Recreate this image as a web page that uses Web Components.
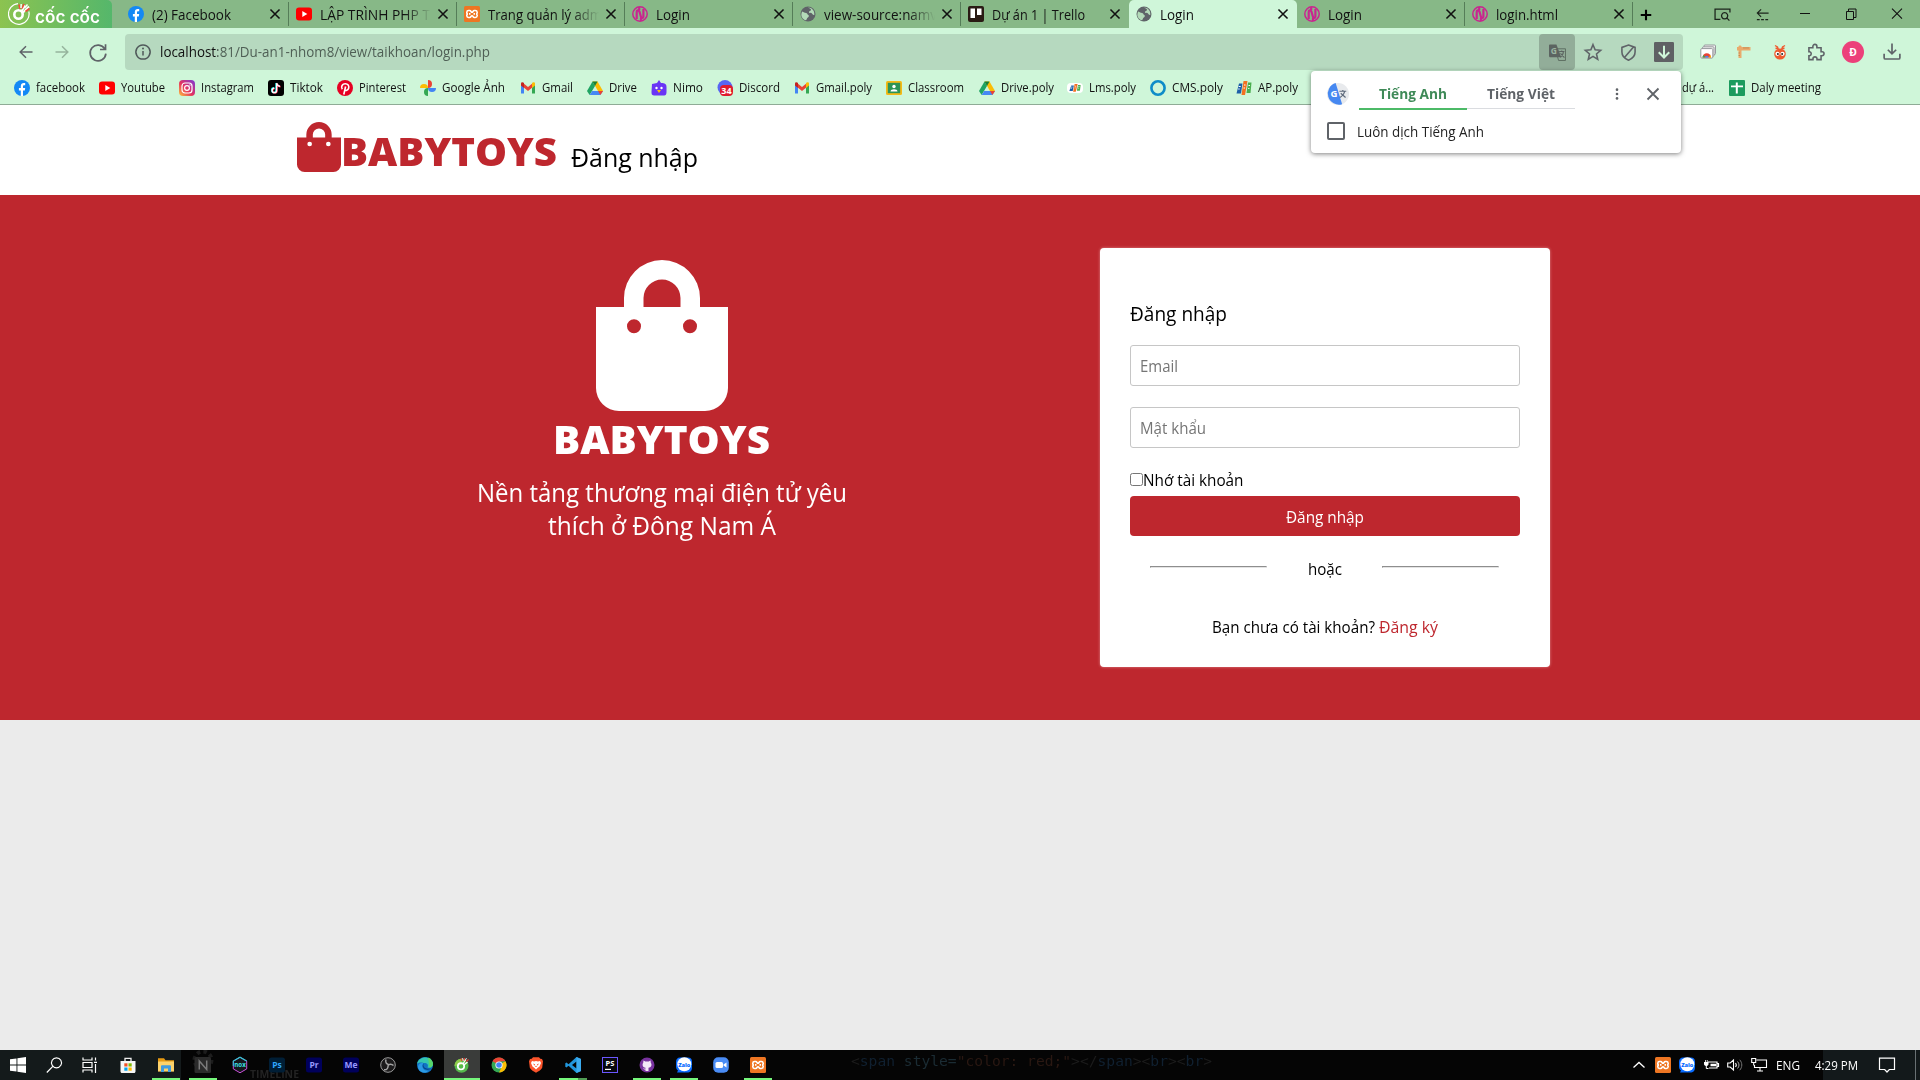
<!DOCTYPE html>
<html lang="vi">
<head>
<meta charset="utf-8">
<title>Login</title>
<style>
html,body{margin:0;height:100%}
body{font-family:"Open Sans","Noto Sans",sans-serif;font-size:12px;color:#111;background:#ebebeb;overflow:hidden}
</style>
</head>
<body>
<desktop-screen></desktop-screen>
<script>
const globe = '<circle cx="8" cy="8" r="7.500" fill="#5f6368"/><path d="M2 5.500c2 .5 2.500 1.500 4 1.500s1 1.500 2.300 2c1 .5.500 2-.5 2.500s-.8 2-1.800 2.800C3 13.500 1 11 1.400 8zM8 1.400c1 1 3 .8 3 2.300s-2 1-2 2.300 2.500.5 3 1.500 1.600 1.600 2.300 1.500C14.800 4.500 12 1.500 8 1.400z" fill="#b3dab8"/>';
const nlogo = '<circle cx="8" cy="8" r="7.200" fill="none" stroke="#c9258f" stroke-width="1.500"/><path d="M4.700 13V6c0-2 2-2 2.700-.5l1.600 5.500c.6 1.600 2.400 1.300 2.400-.4V3M7.200 1v3M9 15v-3" fill="none" stroke="#c9258f" stroke-width="2.200"/>';
const xampp = '<rect width="16" height="16" rx="1.500" fill="#ee7623"/><path d="M4.500 4.500h1.200C7 4.500 7 6.300 8 6.300s1-1.800 2.300-1.800h1c2.400 0 2.400 3.500.7 3.500 1.700 0 1.700 3.500-.7 3.500h-1C9 11.500 9 9.700 8 9.700s-1 1.800-2.300 1.800H4.500c-2.200 0-2.200-3.500-.5-3.500-1.700 0-1.700-3.500.5-3.500zM5 7.900h1.500M9.500 7.900H11" fill="none" stroke="#fff" stroke-width="1.600"/>';
const gmail = '<path d="M1 3.500v10h3V7.200z" fill="#4285f4"/><path d="M15 3.500v10h-3V7.200z" fill="#34a853"/><path d="M4 3.800 8 7l4-3.200v4L8 11 4 7.800z" fill="#ea4335"/><path d="M1 3.700C1 2 3 2 4 3v4.900L1 5.600z" fill="#c5221f"/><path d="M15 3.700C15 2 13 2 12 3v4.900l3-2.300z" fill="#fbbc04"/>';
const drive = '<path d="M5.500 1.500h5L16 11h-5z" fill="#fbbc04"/><path d="M5.500 1.500 8 6 2.600 15 0 11z" fill="#1fa463"/><path d="M5.200 11H16l-2.600 4H2.600z" fill="#4688f4"/><path d="M10.500 1.500 8 6 5.500 1.500z" fill="#188038"/><path d="m11 11h5l-2.600 4z" fill="#ea4335"/>';
const yt = '<rect y="1.500" width="16" height="13" rx="3" fill="#f00"/><path d="M6.300 5v6l5-3z" fill="#fff"/>';
const fb = '<circle cx="8" cy="8" r="8" fill="#1489f5"/><path d="M6.800 16v-5.500H4.900V8h1.900V6.300C6.800 4 8 3 9.700 3l1.500.1v2.100h-1c-.9 0-1.200.5-1.200 1.200V8h2.200l-.4 2.500H9V16z" fill="#fff"/>';
const zalo = '<path d="M4 .5h8c2.500 0 4 1.500 4 4v6c0 3-1.500 5-5 5H1l1-2C.5 12.500 0 11 0 9V5C0 2 1.500.5 4 .5z" fill="#0a6cff"/><circle cx="8.300" cy="7.300" r="7" fill="#fff"/><text x="8.300" y="9.500" font-size="5.600" font-weight="800" text-anchor="middle" fill="#0a6cff" font-family="Open Sans">Zalo</text>';
const fpt = '<path d="M3 3.500h3.500L5 13.500H.5z" fill="#1d5fa8"/><path d="M7.500 1h4L9 15H5.500z" fill="#f37021"/><path d="M12 2.500h3.500L14.500 13H10.500z" fill="#4bae4f"/><path d="M2.700 6.500h2M2.200 9h1.500M8 5h1.500M7.500 8h1.500M12.500 5.500h1.500M12.200 8.500h1.200" stroke="#fff" stroke-width="1"/>';
const adobe = (t,b,c)=>`<rect y=".5" width="16" height="15" rx="2.500" fill="${b}"/><text x="8" y="11" font-size="8.500" font-weight="700" text-anchor="middle" fill="${c}" font-family="Open Sans">${t}</text>`;
const line = (d,c='#5f6368',w=1.5)=>`<path d="${d}" fill="none" stroke="${c}" stroke-width="${w}"/>`;
const ICONS = {
 fb, yt, gmail, drive, xampp, globe, nlogo, zalo,
 trello:'<rect width="16" height="16" rx="2" fill="#2a1b14"/><path d="M2.500 2.500H7V12H2.500zM9 2.500h4.500V9H9z" fill="#fff"/>',
 insta:'<defs><linearGradient id="g" x1="0" y1="1" x2="1" y2="0"><stop stop-color="#fdc33d"/><stop offset=".45" stop-color="#e5325f"/><stop offset="1" stop-color="#7b38d8"/></linearGradient></defs><rect width="16" height="16" rx="4" fill="url(#g)"/><rect x="3" y="3" width="10" height="10" rx="3" fill="none" stroke="#fff" stroke-width="1.200"/><circle cx="8" cy="8" r="2.400" fill="none" stroke="#fff" stroke-width="1.200"/><circle cx="11" cy="5" r=".7" fill="#fff"/>',
 tiktok:'<rect width="16" height="16" rx="3" fill="#000"/>'+line('M8.200 3v7.200a2.200 2.200 0 1 1-2.200-2.200M8.200 3c.4 2 1.500 3 3.500 3.200','#25f4ee',1.8)+line('M9 3.500v7.200a2.200 2.200 0 1 1-2.200-2.200M9 3.500c.4 2 1.500 3 3.500 3.200','#fe2c55',1.6)+line('M8.600 3.200v7.200a2.200 2.200 0 1 1-2.200-2.200M8.600 3.200c.4 2 1.500 3 3.500 3.200','#fff',1.3),
 pin:'<circle cx="8" cy="8" r="8" fill="#e60023"/>'+line('M6.800 14.500 8.600 6.500M5.300 9.300C3.500 6.500 5.500 3.800 8.300 3.800c2.600 0 3.900 1.900 3.400 4.200-.6 2.500-3.200 3.200-4.100 1.500','#fff',1.6),
 photos:'<path d="M8 8V0a4 4 0 0 1 0 8z" fill="#fbbc04" transform="rotate(-90 8 8)"/><path d="M8 8V0a4 4 0 0 0 0 8z" fill="#ea4335" transform="rotate(0 8 8)" opacity="0"/><path d="M8 8h8a4 4 0 0 0-8 0z" fill="#4285f4" transform="translate(0 0) scale(1 -1) translate(0 -16)"/><path d="M8 8v8a4 4 0 0 1 0-8z" fill="#34a853"/><path d="M8 8V0a4 4 0 0 1 0 8z" fill="#ea4335"/>',
 nimo:'<path d="M1 4 6 3l2-3 2 3c4 0 5.500 1 5.500 4v5c0 3-1 3.500-4 3.500H4C1 15.500.5 14.500.5 12z" fill="#6a35f5"/><circle cx="5.500" cy="8" r="1.200" fill="#fff"/><circle cx="10.500" cy="8" r="1.200" fill="#fff"/><path d="M6 10h4l-2 3z" fill="#fdc400"/>',
 discord:'<circle cx="8" cy="7.500" r="7.500" fill="#5865f2"/><rect x="3" y="5" width="13" height="11" rx="4" fill="#e01b2e"/><text x="9.500" y="13.700" font-size="9" font-weight="700" text-anchor="middle" fill="#fff" font-family="Open Sans">34</text>',
 classroom:'<rect y="1" width="16" height="14" rx="1.500" fill="#f5ba16"/><rect x="1.800" y="2.800" width="12.400" height="10.400" fill="#2d9455"/><circle cx="8" cy="6.500" r="1.700" fill="#fff"/><path d="M4.500 11.500c0-3 7-3 7 0z" fill="#fff"/>',
 lms:'<rect y="3" width="16" height="10" rx="4" fill="#fff"/><g transform="translate(2 3.500) scale(.75 .55)">'+fpt+'</g>',
 cms:'<ellipse cx="8" cy="8" rx="6.600" ry="6.700" fill="none" stroke="#0e8cc8" stroke-width="2.600"/>', ap:fpt,
 sheet:'<rect width="16" height="16" rx="1" fill="#1c9b5e"/><path d="M6.800 2.500h2V5.500H14v1.800H8.800v6.200h-2V7.300H2V5.500h4.800z" fill="#fff"/>',
 close:line('M2.800 2.800l10.400 10.400M13.200 2.800l-10.400 10.400','#111',1.8), plus:line('M8 2v12M2 8h12','#000',2.4),
 back:line('M14.500 8H2M8 2.200 2.200 8 8 13.800'), fwd:line('M1.500 8H14M8 2.200 13.800 8 8 13.800','#96b49d'),
 reload:line('M14 5.200A7 7 0 1 0 15 9.500M14.700 1v4.800H9.800'),
 info:line('M8 .9a7.100 7.100 0 1 0 .01 0M8 7v4.600','#50595a',1.5)+'<circle cx="8" cy="4.600" r="1" fill="#50595a"/>',
 star:line('M8 1.500l1.900 4.600 4.900.4-3.700 3.200 1.100 4.800L8 11.900l-4.200 2.600 1.100-4.800L1.200 6.500l4.900-.4z','#5f6368',1.4),
 shield:line('M8 1 14.200 3.200v4.300c0 3.500-2.600 6.300-6.200 7.700C4.400 13.800 1.800 11 1.800 7.500V3.200zM4 13 12.500 3'),
 dl:'<rect width="16" height="16" rx="1" fill="#5f6064"/>'+line('M8 3v9M3.800 8.200 8 12.400l4.200-4.200','#cff6d9',1.6),
 trans:'<path d="M6 4.500h9.500v11H9z" fill="none" stroke="#5c6c61" stroke-width=".9"/><path d="M1 .5h6L11.500 12.500H1.500C.5 12.500 0 12 0 11V1.500C0 .8.500.5 1 .5z" fill="#5c6461"/><text x="4.600" y="9.200" font-size="8" font-weight="700" text-anchor="middle" fill="#9bb5a2" font-family="Open Sans">G</text>'+line('M9.500 7h5M12 6v1M10.500 12.500c1.800-1.200 3-2.800 3-5.200M10.800 8.800l3.700 4','#5c6461',1),
 gtr:'<circle cx="8" cy="8" r="8" fill="#e8eaed"/><path d="M6.300 0A8 8 0 1 0 11 15.400z" fill="#4688f1"/><text x="5" y="10.500" font-size="7" font-weight="700" text-anchor="middle" fill="#fff" font-family="Open Sans">G</text>'+line('M9 6h5M11.500 5v1M9.500 10.500c1.500-1 3-2 3.300-4.500M10 7.500l3.500 3','#5f6b7c',.9),
 shot:'<rect x="4" y="1" width="11.500" height="9.500" rx="1" fill="#f3f3f3" stroke="#96989c"/><rect x="2.500" y="2.800" width="11.500" height="9.500" rx="1" fill="#f3f3f3" stroke="#96989c"/><rect x=".8" y="4.600" width="12" height="9.500" rx="1" fill="#fff" stroke="#96989c"/><path d="M2.500 13.600a4.300 4.300 0 0 1 8.600 0z" fill="#e94335"/><path d="M2.500 13.600c0-1 .3-2 1-2.700l2 2.700z" fill="#34a853"/><path d="M9 13.600 10.200 11c.6.700.9 1.500.9 2.600z" fill="#fbbc04"/><path d="M5 13.600a1.800 1.800 0 0 1 3.600 0z" fill="#4285f4"/>',
 ruler:'<path d="M2.500 2.500c0-1.300 3-1.300 3 0V3H14.500v3.600H5.500V14h-3V6.600H1V3h1.500z" fill="#e9aa6c"/>'+line('M8 3v1.800M10 3v1.800M12 3v1.800M2.500 9H4M2.500 11.500H4','#b67d48',.7),
 ant:'<ellipse cx="8" cy="10" rx="5.800" ry="5.500" fill="#ef5a30"/>'+line('M6.500 5.500 5.500 3 3 1.500M9.500 5.500l1-2.500L13 1.500M5.500 4l-2 .5M10.500 4l2 .5','#ef5a30',1.3)+'<circle cx="5.500" cy="9.800" r="2.100" fill="#fff"/><circle cx="10.500" cy="9.800" r="2.100" fill="#fff"/><circle cx="5.900" cy="10" r="1" fill="#222"/><circle cx="10.100" cy="10" r="1" fill="#222"/>',
 puzzle:line('M1.700 4.200H5.200V3a1.700 1.700 0 0 1 3.600 0v1.200h3.700v3.600h.9a1.750 1.750 0 0 1 0 3.500h-.9v3.500H8.900v-.7a1.800 1.800 0 0 0-3.600 0v.7H1.700v-3.500h.7a1.800 1.800 0 0 0 0-3.500h-.7z','#5f6368',1.4),
 avatar:'<circle cx="8" cy="8" r="8" fill="#ec407a"/><text x="8" y="10.700" font-size="7.500" font-weight="700" text-anchor="middle" fill="#fff" font-family="Open Sans">Đ</text>',
 tray:line('M8 .5v9M4.300 6 8 9.700 11.700 6M1 9.500v3.500c0 .7.500 1.200 1.200 1.200h11.600c.7 0 1.200-.5 1.200-1.200V9.500'),
 wsearch:line('M6 12.500H1V3h14v3M10 6.300a2.900 2.900 0 1 0 .01 0M12 11.200l2.500 2.600','#1c241c',1.2), warrow:line('M14.500 6.500H2.500M6.500 2.500l-4 4 4 4M2 13.500h3M6.500 13.500h3M11 13.500h3','#1c241c',1.3),
 wmin:line('M3 7.500h10','#111',1), wmax:line('M3.500 5.500h7v8h-7zM5.500 5V3h7.500v8.500H11','#111',1), wclose:line('M3 2.700l10 10M13 2.700l-10 10','#111',1.1),
 dots:'<circle cx="8" cy="3" r="1.500" fill="#5f6368"/><circle cx="8" cy="8" r="1.500" fill="#5f6368"/><circle cx="8" cy="13" r="1.500" fill="#5f6368"/>', xg:line('M2.500 2.500l11 11M13.500 2.500l-11 11','#5f6368',1.8),
 win:'<path d="M0 2.300 6.500 1.400V7.600H0zM7.400 1.300 16 0v7.600H7.400zM0 8.400h6.500v6.200L0 13.700zM7.400 8.400H16V16l-8.600-1.200z" fill="#fff"/>',
 find:line('M10.500.8a5 5 0 1 0 .01 0M6.800 9.300.8 15.500','#fff',1.2),
 task:line('M1 .5v2.500h9V.5M1 5.500h9v5H1zM1 15.500V13h9v2.500M13.500.5v3M13.500 7v9M12 5.300h3','#fff',1.2),
 store:'<path d="M5 4V1.300h6V4" fill="none" stroke="#eee" stroke-width="1.300"/><path d="M.5 4h15v10.500c0 .8-.6 1.500-1.500 1.500H2c-.9 0-1.500-.7-1.500-1.500z" fill="#f5f5f5"/><path d="M4.300 6.300h3.200v3.200H4.300z" fill="#f25022"/><path d="M8.500 6.300h3.200v3.200H8.500z" fill="#7fba00"/><path d="M4.300 10.500h3.200v3.200H4.300z" fill="#00a4ef"/><path d="M8.500 10.500h3.200v3.200H8.500z" fill="#ffb900"/>',
 folder:'<path d="M0 1.200h6l1.500 2H16v11H0z" fill="#e79a12"/><path d="M0 4.500h16v10H0z" fill="#fdd26b"/><path d="M3 15V9.500c0-.8.500-1.200 1.200-1.200h7.600c.7 0 1.200.4 1.200 1.200V15h-3v-3.500H6V15z" fill="#3f9be0"/>',
 neo:'<circle cx="8" cy="3" r="8.500" fill="none" stroke="#1d1d1d" stroke-width="4" stroke-dasharray="3.500 3.200"/><rect x="-.5" width="16.500" height="16" rx="1.500" fill="#2b2b2b"/>'+line('M4.300 12.500V4l7.400 8.500V3.500','#7b7b7b',1.5),
 nox:'<path d="M8 .2 14.700 4.100v7.800L8 15.800 1.300 11.900V4.100z" fill="#15171c" stroke="#c94fd8" stroke-width="1"/><path d="M1.300 9V4.100L8 .2l6.700 3.900" fill="none" stroke="#30c9d6" stroke-width="1.100"/><text x="8" y="10" font-size="6.200" font-weight="700" text-anchor="middle" fill="#3ce0e5" font-family="Open Sans">nox</text>',
 ps:adobe('Ps','#001e36','#31a8ff'), pr:adobe('Pr','#00005b','#9999ff'), me:adobe('Me','#00005b','#9999ff'),
 obs:'<circle cx="8" cy="8" r="7.300" fill="#1c1b1c" stroke="#9b9b9b"/><path d="M6 2.500c-1 3 .5 4.500 2.500 5M13.500 8.500c-2-2-4.500-1.500-5.500 0M4 12.800c3 .3 4.500-2 4-4.500" fill="none" stroke="#a5a5a5" stroke-width="1.500"/>',
 edge:'<circle cx="8" cy="8" r="8" fill="#1173c4"/><path d="M.1 7C1-.8 14.500-2.200 16 7c.3 3-2.700 4.300-5.500 3.500 1.500-3.500-1-5-4-4.500C3 5 .8 6 .1 7z" fill="#35c6b0"/><path d="M11 .6c3 1 5 4 5 6.400-.2 2-1.500 3.300-3.500 3.600z" fill="#58d66a"/><path d="M6.300 6.200C4 9 6 14.500 11.500 13.700 8 17.500 1 15 1 9.500c1-3 3-3.700 5.300-3.300z" fill="#2b9ae4"/><path d="M7 6.500c-2 2.500 1 6.500 7.500 5-1 1-7 2.500-8.500-1.500C5.300 8.500 6 7 7 6.500z" fill="#063f83"/>',
 coccoc:'<circle cx="7.500" cy="8.800" r="7" fill="#55b94b"/><path d="M.5 9A7 7 0 0 1 8 1.800L7.500 8z" fill="#8fca4a"/><circle cx="7" cy="9.300" r="3.200" fill="none" stroke="#fff" stroke-width="1.700"/>'+line('M9.300 6.500 11.500 2.500M10 8l3.500-3','#fff',1.2)+line('M7 1.500l1 2.500M10.500 1l-.8 3M14.500 2.500 12 4.700','#ed3a38',1.1)+line('M8.500 1l.8 3M12.500 1l-1.500 3','#fff',.8),
 chrome:'<circle cx="8" cy="8" r="7.500" fill="#34a853"/><path d="M8 8 1.500 4.250A7.500 7.500 0 0 1 14.500 4.250L8 4.500z" fill="#ea4335"/><path d="M8 8 14.500 4.250A7.500 7.500 0 0 1 8 15.500L11 9.500z" fill="#fbbc04"/><circle cx="8" cy="8" r="3.600" fill="#fff"/><circle cx="8" cy="8" r="2.800" fill="#4285f4"/>',
 brave:'<path d="M5 .3h6l1.300 1.500 1.700.3 1 2.200-.8 6.500c-1 2-4.200 4-6.200 5-2-1-5.200-3-6.200-5L1 4.300l1-2.200 1.700-.3z" fill="#fb542b"/><path d="M4 4l2 .5L8 4l2 .5 2-.5 1 2-1.500 3.500L9.500 11 8 12.500 6.500 11l-2-1.500L3 6z" fill="#fff"/><path d="M5 6.500l2 .7-.5 1.500zM11 6.500l-2 .7.5 1.500zM8 8.500 7 10h2z" fill="#fb542b"/>',
 vscode:'<path d="M11.500 0 16 2v12l-4.500 2-8-7.300L1.500 10.500.3 9.800V6.200l1.200-.7 2 1.700zM11.500 4.500 7 8l4.500 3.500z" fill="#2196dc" fill-rule="evenodd"/><path d="M11.500 0 16 2v12l-4.500 2z" fill="#3bacf0"/>',
 phps:'<rect x=".5" y=".5" width="15" height="15" fill="#08080f" stroke="#6b57ff"/><text x="8" y="9" font-size="7.500" font-weight="700" text-anchor="middle" fill="#fff" font-family="Open Sans">PS</text><path d="M3 11.800h6v1.200H3z" fill="#fff"/>',
 github:'<circle cx="8" cy="8" r="7.500" fill="#78329e"/><path d="M4.500 3.500 6.300 4.500h3.400l1.800-1c.3 1 .2 1.500.2 2C13.500 8 12 10.500 9.500 10.800V14h-3v-1.500c-1.500.2-2-.7-2.500-1.500 1 .2 1.300.9 2.500.7v-.9C4 10.500 2.700 8 4.300 5.500c0-.5 0-1 .2-2z" fill="#f3e9f8"/>',
 zoomapp:'<rect x=".2" y=".2" width="15.600" height="15.600" rx="5" fill="#4a8cf5"/><rect x="2.500" y="5" width="7.500" height="6" rx="1.500" fill="#fff"/><path d="M10.500 7.500 13.500 5.500v5l-3-2z" fill="#fff"/>',
 up:line('M2.500 10.500 8 5.500l5.500 5','#fff',1.3),
 batt:line('M5 5h9v6H6M14.500 6.500h1v3h-1','#fff',1.2)+'<path d="M7.500 6.800h5.700v2.500H7.500zM1 5h4.500v2c0 1-.8 1.800-1.700 2H3c-1.200-.2-2-1-2-2zM2 3h.8v2H2zM3.800 3h.8v2h-.8z" fill="#fff"/>'+line('M3.300 9v2.500H5.500','#fff',1),
 vol:line('M.7 6h2.500L6.500 3v10L3.200 10H.7zM8.500 6c1 1.300 1 2.800 0 4','#fff',1.1)+line('M10.500 4.500c2 2 2 5 0 7','#aaa',1)+line('M12.700 2.800c2.800 3 2.800 7.400 0 10.400','#777',1),
 net:line('M5.500 3h10v7.500h-12V8M9 10.500v3M6 14h6M.7 1.500h4v4h-4zM2.700 5.500v3','#fff',1.1),
 note:line('M.5 1.200h15v11.300H10.300L8 15l-2.300-2.500H.5z','#fff',1.2)
};
class El extends HTMLElement{
  constructor(){super();this.attachShadow({mode:'open'});}
  connectedCallback(){if(!this.done){this.done=1;this.shadowRoot.innerHTML=this.render();this.after&&this.after();}}
  a(n,d=''){return this.getAttribute(n)??d;}
}
const def=(n,c)=>customElements.define(n,c);

/* Vector icon drawn on a 16-unit grid */
def('ui-icon',class extends El{render(){const s=this.a('size','16');return `<style>:host{display:block;flex:none;width:${s}px;height:${s}px}svg{display:block;overflow:visible}</style><svg width="${s}" height="${s}" viewBox="0 0 16 16">${ICONS[this.a('name')]||''}</svg>`;}});

/* Single line of text condensed or widened to a set width */
def('fit-text',class extends El{
  render(){return `<style>:host{display:block;flex:none;white-space:nowrap;width:${this.a('w')}px}span{display:inline-block;transform-origin:0 50%}</style><span><slot></slot></span>`;}
  after(){const s=this.shadowRoot.querySelector('span'),n=s.getBoundingClientRect().width;if(n)s.style.transform=`scaleX(${this.a('w')/n})`;}
});

def('browser-tab',class extends El{render(){const on=this.hasAttribute('active');return `<style>
:host{display:flex;align-items:center;box-sizing:border-box;width:168px;height:28px;padding-left:7px;flex:none;font-size:14px;line-height:27px;background:${on?'#cff6d9':'none'};${on?'border-radius:5px 5px 0 0;':''}position:relative}
.t{width:114px;margin-left:8px;overflow:hidden;${this.hasAttribute('fade')?'-webkit-mask:linear-gradient(90deg,#000 84px,transparent 111px);':''}}
.c{margin-left:2px}
i{width:1px;height:24px;margin-left:6px;background:${this.hasAttribute('nosep')?'none':'#557d58'}}</style>
<ui-icon name="${this.a('icon')}"></ui-icon><div class="t"><fit-text w="${this.a('w')}">${this.a('label')}</fit-text></div><ui-icon class="c" name="close" size="14"></ui-icon><i></i>`;}});

def('tab-strip',class extends El{render(){const T=[['fb','(2) Facebook',79],['yt','LẬP TRÌNH PHP T',110,'fade'],['xampp','Trang quản lý adm',114,'fade'],['nlogo','Login',34],['globe','view-source:namv',113,'fade'],['trello','Dự án 1 | Trello',93,'nosep'],['globe','Login',34,'active nosep'],['nlogo','Login',34],['nlogo','login.html',62]];
return `<style>:host{display:flex;height:28px;background:#87b887}
.logo{display:flex;align-items:center;width:112px;box-sizing:border-box;padding-left:8px;gap:4px;background:linear-gradient(90deg,#8cc350,#55b76b);border-radius:0 5px 0 0;color:#fff;font:600 18px/24px Inter,"Open Sans",sans-serif;margin-right:9px}
.logo fit-text{margin-top:5px}.plus{margin:8px 0 0 6px}.sp{flex:1}.w{display:flex;align-items:center}</style>
<div class="logo"><svg width="23" height="24" viewBox="0 0 23 24" fill="none" stroke="#fff"><path d="M10 1.700A10.300 10.300 0 1 0 20.800 9.500" stroke-width="1.200"/><circle cx="10.500" cy="12.500" r="4.200" stroke-width="2.600"/><path d="M13.500 9.500 17 3.500M14.500 11 21 4.500" stroke-width="2"/><path d="M10.800 2.500l1.300 4.500M16 2l-2 4.500M21.500 6.500 17.500 9.500" stroke="#ee4a3c" stroke-width="1.600"/><path d="M13.200 2 13 6M19.500 2.500 16.500 6" stroke-width="1.400"/></svg><fit-text w="65">cốc cốc</fit-text></div>
${T.map(t=>`<browser-tab icon="${t[0]}" label="${t[1]}" w="${t[2]}" ${t[3]||''}></browser-tab>`).join('')}
<ui-icon class="plus" name="plus" size="14"></ui-icon><div class="sp"></div>
<div class="w"><ui-icon name="wsearch" size="17" style="margin-right:24px"></ui-icon><ui-icon name="warrow" size="15" style="margin-right:27px"></ui-icon><ui-icon name="wmin" style="margin-right:30px"></ui-icon><ui-icon name="wmax" style="margin-right:30px"></ui-icon><ui-icon name="wclose" style="margin-right:15px"></ui-icon></div>`;}});

def('address-bar',class extends El{render(){return `<style>:host{display:flex;align-items:center;height:42px;padding-top:6px;box-sizing:border-box;padding-left:18px}
:host>ui-icon{margin-right:20px}
.box{display:flex;align-items:center;width:1558px;height:36px;box-sizing:border-box;padding-left:10px;background:#b6d9bf;border-radius:4px;font-size:14px;line-height:36px;color:#4f5f55}
.box b{font-weight:400;color:#111}.box fit-text{margin-left:9px}.sp{flex:1}
.tr{display:flex;align-items:center;justify-content:center;width:36px;height:36px;background:#92ad99;border-radius:4px;margin-right:9px}
.ext{display:flex;align-items:center;margin-left:17px}</style>
<ui-icon name="back" size="16"></ui-icon><ui-icon name="fwd" size="16"></ui-icon><ui-icon name="reload" size="18" style="margin-left:-1px;margin-right:18px"></ui-icon>
<div class="box"><ui-icon name="info"></ui-icon><fit-text w="330"><b>localhost</b>:81/Du-an1-nhom8/view/taikhoan/login.php</fit-text><div class="sp"></div>
<div class="tr"><ui-icon name="trans" size="17"></ui-icon></div><ui-icon name="star" size="18" style="margin-right:18px"></ui-icon><ui-icon name="shield" size="17" style="margin-right:17px"></ui-icon><ui-icon name="dl" size="20" style="margin-right:9px"></ui-icon></div>
<div class="ext"><ui-icon name="shot" style="margin-right:20px"></ui-icon><ui-icon name="ruler" style="margin-right:20px"></ui-icon><ui-icon name="ant" style="margin-right:19px"></ui-icon><ui-icon name="puzzle" size="18" style="margin-right:17px"></ui-icon><ui-icon name="avatar" size="22" style="margin-right:19px"></ui-icon><ui-icon name="tray" size="18"></ui-icon></div>`;}});

def('bookmark-bar',class extends El{render(){const B=[[14,'fb','facebook',49],[99,'yt','Youtube',44],[179,'insta','Instagram',53],[268,'tiktok','Tiktok',33],[337,'pin','Pinterest',47],[420,'photos','Google Ảnh',63],[520,'gmail','Gmail',31],[587,'drive','Drive',28],[651,'nimo','Nimo',30],[717,'discord','Discord',41],[794,'gmail','Gmail.poly',56],[886,'classroom','Classroom',56],[979,'drive','Drive.poly',53],[1067,'lms','Lms.poly',47],[1149.5,'cms','CMS.poly',51],[1236,'ap','AP.poly',40],[1660,'gmail','dự á...',32],[1729,'sheet','Daly meeting',70]];let x=0;
return `<style>:host{display:flex;align-items:center;height:34px;box-sizing:border-box;font-size:12.500px;line-height:20px}div{display:flex;align-items:center;gap:6px;height:34px;padding-top:2px;box-sizing:border-box}fit-text{margin-top:-1px}</style>${B.map(b=>{const g=b[0]-x;x=b[0]+22+b[3];return `<div style="margin-left:${g}px"><ui-icon name="${b[1]}"></ui-icon><fit-text w="${b[3]}">${b[2]}</fit-text></div>`}).join('')}`;}});

def('translate-popup',class extends El{render(){return `<style>:host{position:absolute;left:1311px;top:71px;width:370px;height:82px;box-sizing:border-box;background:#fff;border-radius:4px;box-shadow:0 1px 5px rgba(0,0,0,.5);padding:6px 0 0 17px;font-size:14px;color:#222}
.r{display:flex;align-items:center;height:33px}.tabs{display:flex;margin-left:9px;height:33px}
.tabs div{width:108px;box-sizing:border-box;padding-left:20px;height:32px;line-height:33px;border-bottom:1px solid #dadce0;font-weight:700;color:#5f6368}
.tabs .on{height:33px;border-bottom:2px solid #4cba67;color:#3f8a58}
.l{display:flex;align-items:center;gap:12px;height:42px}.cb{width:14px;height:14px;border:2px solid #5f6368;border-radius:2px;margin-left:-1px}</style>
<div class="r"><ui-icon name="gtr" size="22" style="margin-left:-1px"></ui-icon><div class="tabs" style="margin-left:10px"><div class="on"><fit-text w="68">Tiếng Anh</fit-text></div><div><fit-text w="68">Tiếng Việt</fit-text></div></div><ui-icon name="dots" size="14" style="margin-left:35px"></ui-icon><ui-icon name="xg" size="16" style="margin-left:21px"></ui-icon></div>
<div class="l"><i class="cb"></i><fit-text w="127">Luôn dịch Tiếng Anh</fit-text></div>`;}});

def('browser-chrome',class extends El{render(){return `<style>:host{display:block;height:105px;box-sizing:border-box;background:#cff6d9;border-bottom:1px solid #8fab96}</style><tab-strip></tab-strip><address-bar></address-bar><bookmark-bar></bookmark-bar>`;}});

def('toy-bag',class extends El{render(){return `<style>:host{display:block;flex:none}svg{display:block}</style><svg width="${this.a('w')}" height="${this.a('h')}" viewBox="0 0 132 151" preserveAspectRatio="none"><path fill="currentColor" fill-rule="evenodd" d="M0 47H28V38A37.800 37.800 0 0 1 104 38V47H132V128A23 23 0 0 1 109 151H23A23 23 0 0 1 0 128ZM47.500 47H84.500V38A18.500 18.500 0 0 0 47.500 38ZM31 66.300A7 7 0 1 0 45 66.300A7 7 0 1 0 31 66.300ZM87 66.300A7 7 0 1 0 101 66.300A7 7 0 1 0 87 66.300Z"/></svg>`;}});

def('site-header',class extends El{render(){return `<style>:host{display:flex;height:90px;box-sizing:border-box;padding:17px 0 0 297px;background:#fff;color:#be272e}
.n{font-weight:800;font-size:39.500px;line-height:54px;margin:2px 0 0 0}.p{color:#000;font-size:25px;line-height:40px;margin:15px 0 0 14px}</style>
<toy-bag w="44" h="50"></toy-bag><fit-text class="n" w="216">BABYTOYS</fit-text><fit-text class="p" w="127">Đăng nhập</fit-text>`;}});

def('brand-hero',class extends El{render(){return `<style>:host{display:flex;flex-direction:column;align-items:center;width:370px;margin-left:476.500px;padding-top:65px;color:#fff;font-size:25px;line-height:33px}
.n{font-weight:800;font-size:39px;line-height:54px;margin:.500px 0 10.500px}</style>
<toy-bag w="132" h="151"></toy-bag><fit-text class="n" w="217">BABYTOYS</fit-text><fit-text w="370">Nền tảng thương mại điện tử yêu</fit-text><fit-text w="228">thích ở Đông Nam Á</fit-text>`;}});

def('text-field',class extends El{render(){return `<style>:host{display:block;box-sizing:border-box;height:41px;border:1px solid #c6c6c6;border-radius:3px;padding-left:9px;line-height:41px;color:#757575}</style><fit-text w="${this.a('w')}">${this.a('label')}</fit-text>`;}});

def('login-card',class extends El{render(){return `<style>:host{display:block;width:450px;height:419px;box-sizing:border-box;padding:48px 30px 0;margin:53px 0 0 253.500px;background:#fff;border-radius:4px;box-shadow:0 0 3px rgba(255,255,255,.45);color:#000;font-size:16px}
.h{font-size:20px;line-height:35px;margin-bottom:14px}text-field+text-field{margin-top:21px}
.ck{display:flex;align-items:center;height:22px;margin-top:21px}.ck i{width:11px;height:11px;margin-top:-1px;border:1px solid #767676;border-radius:2.500px}
.btn{display:flex;justify-content:center;height:40px;line-height:43px;background:#be272e;color:#fff;border-radius:4px;margin-top:5px}
.or{display:flex;justify-content:space-between;padding:0 21px 0 20px;height:30px;line-height:31px;margin-top:18px}.or hr{width:115px;margin:12px 0 0;height:0;border:1px solid #8e8e8e;border-bottom-color:#e4e4e4;border-right-color:#e4e4e4;align-self:flex-start}
.ft{display:flex;justify-content:center;gap:4px;line-height:27px;margin-top:30px}.ft .r{color:#be272e}</style>
<fit-text class="h" w="97">Đăng nhập</fit-text><text-field label="Email" w="38"></text-field><text-field label="Mật khẩu" w="66"></text-field>
<div class="ck"><i></i><fit-text w="100.500">Nhớ tài khoản</fit-text></div><div class="btn"><fit-text w="78">Đăng nhập</fit-text></div>
<div class="or"><hr><fit-text w="34">hoặc</fit-text><hr></div>
<div class="ft"><fit-text w="163">Bạn chưa có tài khoản?</fit-text><fit-text class="r" w="59">Đăng ký</fit-text></div>`;}});

def('login-page',class extends El{render(){return `<style>:host{display:block;height:945px;background:#ebebeb}.m{display:flex;align-items:flex-start;height:525px;background:#be272e}</style><site-header></site-header><div class="m"><brand-hero></brand-hero><login-card></login-card></div>`;}});

def('task-bar',class extends El{render(){const A=['folder*','neo*','nox','ps','pr','me','obs','edge','coccoc!','chrome','brave','vscode+','phps','github*','zalo*','zoomapp','xampp*'];
return `<style>:host{display:flex;align-items:stretch;height:30px;background:linear-gradient(90deg,#141a1b 181px,#050505 181px,#050505 1823px,#13191b 1823px);color:#fff;font-size:12.500px;line-height:29px;position:relative;overflow:hidden}
.a{display:flex;align-items:center;justify-content:center;width:37px;box-sizing:border-box;position:relative}
.a.run{background:linear-gradient(#76f77c,#76f77c) center bottom/28px 2px no-repeat}.a.cur{background:linear-gradient(#76f77c,#76f77c) center bottom/36px 2px no-repeat,linear-gradient(#3a3c3a,#3a3c3a) center/36px 100% no-repeat}
.a.two{background:linear-gradient(90deg,#76f77c 19px,#519e55 19px) center bottom/28px 2px no-repeat}
.s{width:36px}.st{width:39px;margin-right:.500px}.sp{flex:1}.tr{display:flex;align-items:center}.tr .i{display:flex;justify-content:center;width:24px}
.g{position:absolute;white-space:pre}.code{left:851px;top:0;line-height:23px;font-family:"DejaVu Sans Mono",monospace;font-size:14px;color:#102030}.tl{left:250px;top:19px;line-height:10px;font-size:10.500px;font-weight:700;color:#232323}
.code b{font-weight:400;color:#1b2c34}.code u{text-decoration:none;color:#2a1812}.code s{text-decoration:none;color:#1c1c1c}
.end{width:1px;background:#697073;margin:0 4px 0 20px;align-self:stretch}</style>
<fit-text class="g code" w="361"><s>&lt;</s>span <b>style=</b><u>"color: red;"</u><s>&gt;&lt;/</s>span<s>&gt;&lt;</s>br<s>&gt;&lt;</s>br<s>&gt;</s></fit-text><fit-text class="g tl" w="49">TIMELINE</fit-text>
<div class="a s"><ui-icon name="win"></ui-icon></div><div class="a s"><ui-icon name="find"></ui-icon></div><div class="a s"><ui-icon name="task"></ui-icon></div><div class="a st"><ui-icon name="store"></ui-icon></div>
${A.map(n=>{const m=n.match(/[*!+]/);return `<div class="a ${m?{'*':'run','!':'cur','+':'two'}[m[0]]:''}"><ui-icon name="${n.replace(/[*!+]/,'')}"></ui-icon></div>`}).join('')}
<div class="sp"></div><div class="tr">${['up','xampp','zalo','batt','vol','net'].map(n=>`<div class="i"><ui-icon name="${n}" size="16"></ui-icon></div>`).join('')}
<fit-text w="24" style="margin-left:5px">ENG</fit-text><fit-text w="43" style="margin-left:15px">4:29 PM</fit-text><ui-icon name="note" style="margin-left:21px"></ui-icon><div class="end"></div></div>`;}});

def('desktop-screen',class extends El{render(){return `<style>:host{display:flex;flex-direction:column;width:1920px;height:1080px;position:relative;overflow:hidden}</style><browser-chrome></browser-chrome><login-page></login-page><task-bar></task-bar><translate-popup></translate-popup>`;}});
</script>
</body>
</html>
